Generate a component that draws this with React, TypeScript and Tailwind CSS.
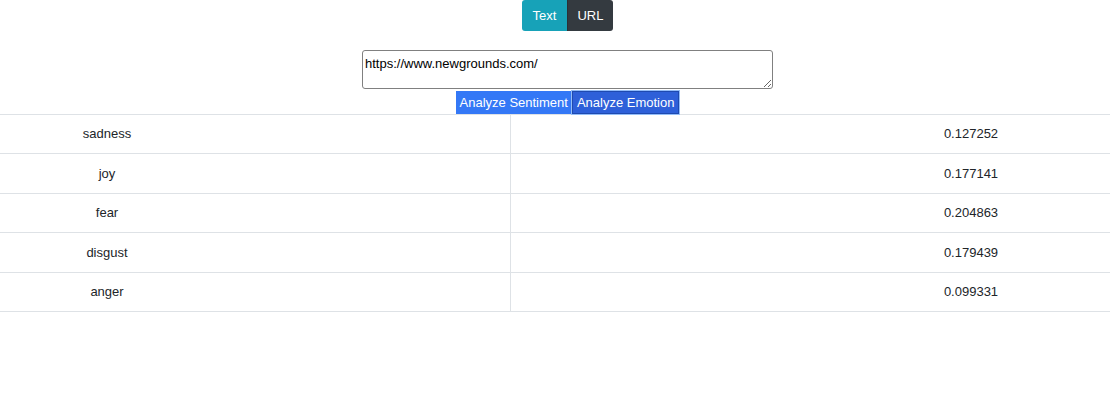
import { useState } from "react";

const rows = [
  { label: "sadness", score: "0.127252" },
  { label: "joy", score: "0.177141" },
  { label: "fear", score: "0.204863" },
  { label: "disgust", score: "0.179439" },
  { label: "anger", score: "0.099331" },
];

export default function App() {
  const [mode, setMode] = useState<"text" | "url">("url");
  const [input, setInput] = useState("https://www.newgrounds.com/");

  return (
    <div
      className="w-full min-h-[413px] bg-white text-[#212529] text-[13px]"
      style={{ fontFamily: '"Liberation Sans", Arial, sans-serif' }}
    >
      <div className="pl-[25px]">
        <div className="flex justify-center">
          <div className="flex h-[31px]">
            <button
              onClick={() => setMode("text")}
              className="w-[45px] rounded-l-[3px] bg-[#17a2b8] text-white text-[13px]"
            >
              Text
            </button>
            <button
              onClick={() => setMode("url")}
              className="w-[46px] rounded-r-[3px] bg-[#343a40] text-white text-[13px] border-l border-[#2b3035]"
            >
              URL
            </button>
          </div>
        </div>

        <div className="flex justify-center mt-[19px]">
          <textarea
            value={input}
            onChange={(e) => setInput(e.target.value)}
            className="w-[411px] h-[39px] border border-[#808080] rounded-[3px] px-[2px] pt-[5px] text-[13px] leading-[16px] text-black outline-none"
            data-mode={mode}
          />
        </div>

        <div className="flex justify-center mt-[2px]">
          <button className="h-[23px] px-[4px] bg-[#3478f6] text-white text-[13px] leading-none">
            Analyze Sentiment
          </button>
          <button className="h-[23px] px-[4px] bg-[#2e60d9] text-white text-[13px] leading-none border border-[#1f4ab0] outline outline-1 outline-[#93bdf9]">
            Analyze Emotion
          </button>
        </div>
      </div>

      <div className="border-t border-[#dee2e6]">
        {rows.map((r) => (
          <div key={r.label} className="flex h-[39.4px] border-b border-[#dee2e6]">
            <div className="w-[510px] flex items-center">
              <div className="w-[214px] text-center">{r.label}</div>
            </div>
            <div className="flex-1 flex items-center justify-end border-l border-[#dee2e6]">
              <div className="w-[278px] text-center">{r.score}</div>
            </div>
          </div>
        ))}
      </div>
    </div>
  );
}
